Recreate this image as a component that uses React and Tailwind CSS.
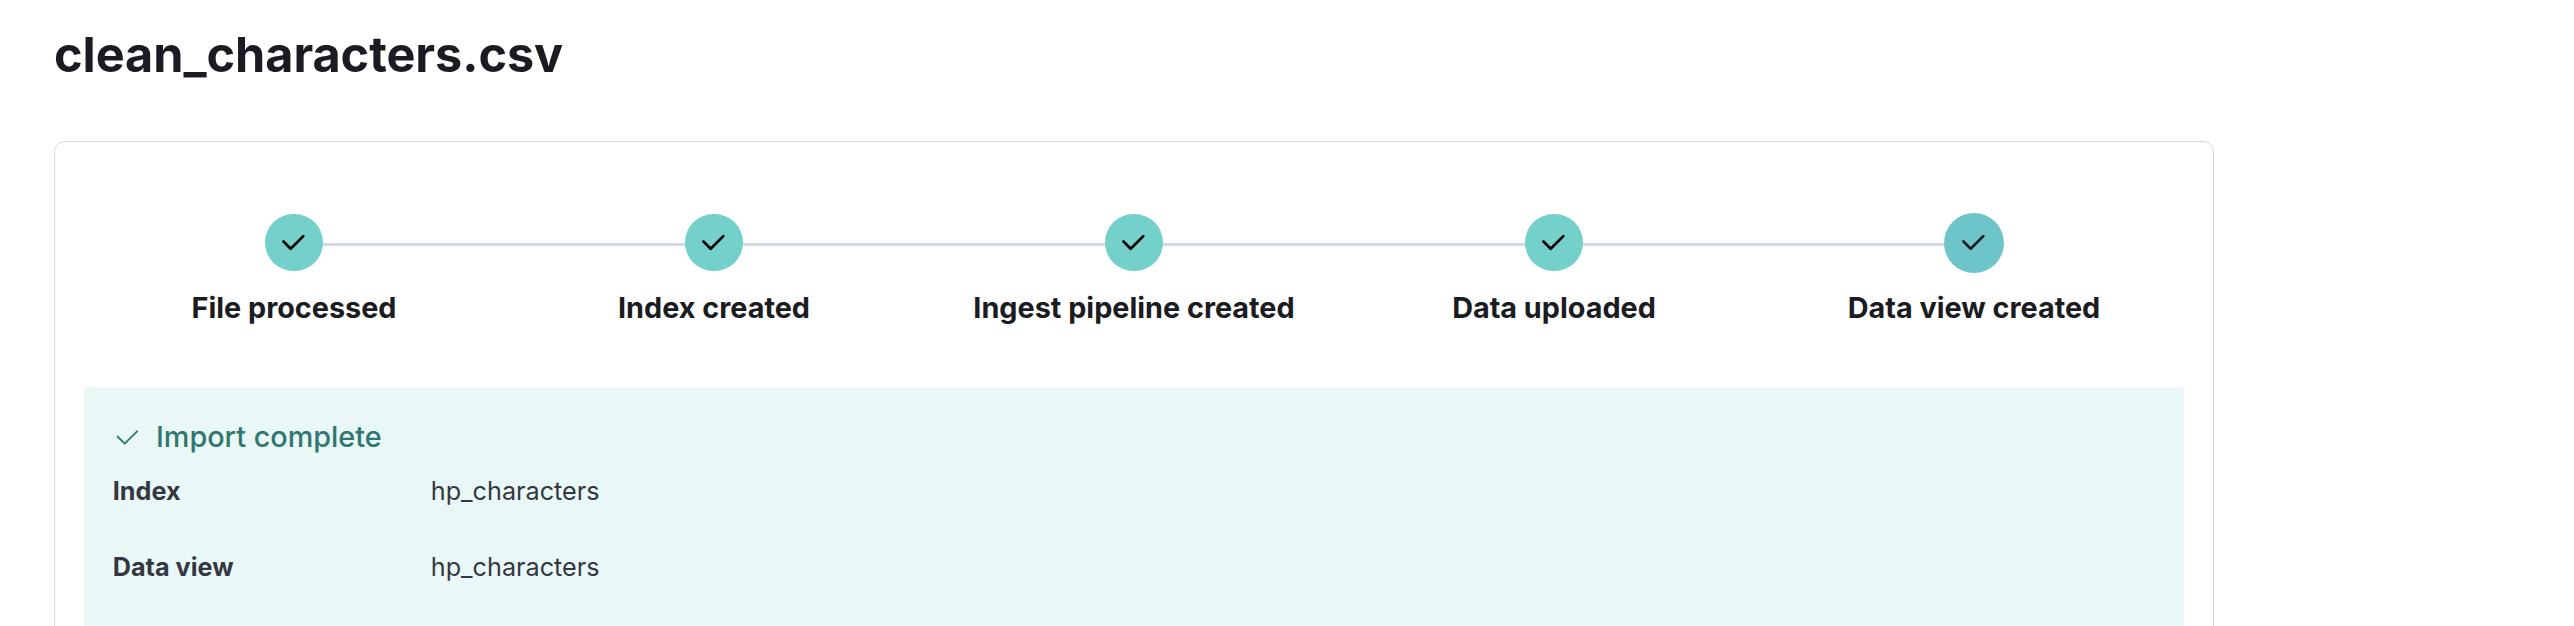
const steps = ['File processed', 'Index created', 'Ingest pipeline created', 'Data uploaded', 'Data view created'];

function Check({ className, strokeWidth }) {
  return (
    <svg className={className} viewBox="0 0 16 16" fill="none" stroke="currentColor" strokeWidth={strokeWidth} strokeLinecap="round" strokeLinejoin="round">
      <path d="M2.500 7.500L6.500 11.500L13.500 4.500" />
    </svg>
  );
}

function Step({ title, index }) {
  const last = index === steps.length - 1;
  return (
    <div className="relative flex flex-1 flex-col items-center">
      {!last && <div className="absolute left-1/2 top-[29.4px] h-[3px] w-full bg-[#d3dae6]" />}
      <div
        className={
          last
            ? 'relative -mt-[0.6px] -mb-[1.4px] flex size-[59.6px] items-center justify-center rounded-full bg-[#6dc5ca] pb-[0.8px] text-[#1a1c21]'
            : 'relative flex size-[57.6px] items-center justify-center rounded-full bg-[#73d0ca] text-black'
        }
      >
        <Check className="mr-[1.4px] size-[28.8px]" strokeWidth="1.5" />
      </div>
      <div className="mt-[18.8px] text-[28.8px] font-bold leading-[36px] whitespace-nowrap">{title}</div>
    </div>
  );
}

export default function App() {
  return (
    <div className="h-[626px] overflow-hidden bg-white pl-[54px] pt-[23px] font-['Inter',sans-serif] text-[#1a1c21]">
      <h1 className="h-[118px] text-[48.6px] font-bold leading-[64px] tracking-[-0.05px]">clean_characters.csv</h1>
      <div className="h-[600px] w-[2160px] rounded-[10.8px] border border-[#d3dae6] px-[29px] pt-[71.6px]">
        <div className="flex h-[173.4px]">
          {steps.map((t, i) => <Step key={t} title={t} index={i} />)}
        </div>
        <div className="h-[260px] bg-[#e9f8f6] px-[28.8px] pt-[32px]">
          <div className="flex items-center text-[28.8px] font-medium leading-[36px] text-[#2f7770]">
            <Check className="mr-[14.4px] size-[28.8px]" strokeWidth="1" />
            Import complete
          </div>
          <dl className="mt-[17.8px] grid grid-cols-[318px_1fr] gap-y-[40px] text-[25.2px] leading-[36px] text-[#343741]">
            <dt className="font-bold">Index</dt>
            <dd>hp_characters</dd>
            <dt className="font-bold">Data view</dt>
            <dd>hp_characters</dd>
          </dl>
        </div>
      </div>
    </div>
  );
}
